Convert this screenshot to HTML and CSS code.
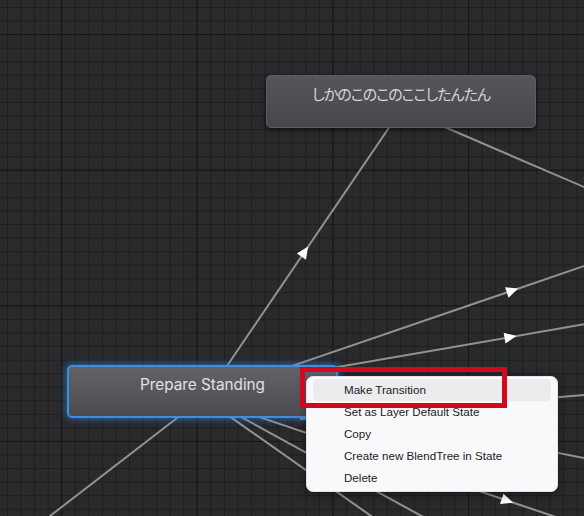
FILE: index.html
```html
<!DOCTYPE html>
<html lang="ja">
<head>
<meta charset="utf-8">
<title>Animator</title>
<link rel="stylesheet" href="styles.css">
</head>
<body>
<div class="canvas">
  <svg class="edges" width="584" height="516" viewBox="0 0 584 516" xmlns="http://www.w3.org/2000/svg">
    <g class="edge-lines">
      <line x1="210" y1="391" x2="401" y2="110"/>
      <line x1="405" y1="110" x2="590" y2="189.6"/>
      <line x1="250" y1="380.4" x2="590" y2="264"/>
      <line x1="300" y1="373.5" x2="590" y2="323.3"/>
      <line x1="220" y1="409.6" x2="391" y2="530"/>
      <line x1="230" y1="410.9" x2="447" y2="530"/>
      <line x1="240" y1="410.6" x2="590" y2="528.5"/>
      <line x1="300" y1="402.6" x2="590" y2="459.2"/>
      <line x1="300" y1="419" x2="590" y2="394.5"/>
      <line x1="190" y1="408" x2="35" y2="527.6"/>
    </g>
    <g class="edge-arrows">
      <polygon points="6.5,0 -5.5,-5.5 -5.5,5.5" transform="translate(304.5 252) rotate(-55.8)"/>
      <polygon points="6.5,0 -5.5,-5.5 -5.5,5.5" transform="translate(512 290.7) rotate(-18.9)"/>
      <polygon points="6.5,0 -5.5,-5.5 -5.5,5.5" transform="translate(510 337.2) rotate(-9.8)"/>
      <polygon points="6.5,0 -5.5,-5.5 -5.5,5.5" transform="translate(507 500.6) rotate(18.6)"/>
    </g>
  </svg>

  <div class="node node-top">
    <span class="node-label label-jp">しかのこのこのここしたんたん</span>
  </div>

  <div class="node node-selected">
    <span class="node-label">Prepare Standing</span>
  </div>

  <div class="menu">
    <div class="menu-item is-hover">Make Transition</div>
    <div class="menu-item">Set as Layer Default State</div>
    <div class="menu-item">Copy</div>
    <div class="menu-item">Create new BlendTree in State</div>
    <div class="menu-item">Delete</div>
  </div>

  <div class="callout"></div>
</div>
</body>
</html>
```

FILE: styles.css
```css
html, body {
  margin: 0;
  padding: 0;
  background: #28272a;
}

.canvas {
  position: relative;
  width: 584px;
  height: 516px;
  overflow: hidden;
  background-color: #2a292c;
  background-image:
    linear-gradient(to right, #151517 1px, transparent 1px),
    linear-gradient(to bottom, #151517 1px, transparent 1px),
    linear-gradient(to right, #1e1e20 1px, transparent 1px),
    linear-gradient(to bottom, #1e1e20 1px, transparent 1px);
  background-size: 135.7px 135.7px, 135.7px 135.7px, 13.57px 13.57px, 13.57px 13.57px;
  background-position: 61px 34px, 61px 34px, 7px 7px, 7px 7px;
}

.edges {
  position: absolute;
  left: 0;
  top: 0;
}

.edge-lines line {
  stroke: #929294;
  stroke-width: 2;
}

.edge-arrows polygon {
  fill: #ffffff;
}

.node {
  position: absolute;
  box-sizing: border-box;
  border-radius: 5px;
  font-family: Inter, "Noto Sans", "Noto Sans CJK JP", sans-serif;
  text-align: center;
}

.node-label {
  display: block;
  line-height: 20px;
}

.node-top {
  left: 266px;
  top: 75px;
  width: 270px;
  height: 53px;
  padding-top: 8px;
  background: linear-gradient(to bottom, #55555b, #46464b);
  border: 1px solid #5c5c62;
  box-shadow: 0 2px 5px rgba(0, 0, 0, 0.55);
  color: #d6d6d8;
}

.label-jp {
  font-family: "Noto Sans CJK JP", sans-serif;
  font-size: 15px;
  font-feature-settings: "palt";
  letter-spacing: -1px;
}

.node-selected {
  left: 67px;
  top: 365px;
  width: 271px;
  height: 53px;
  padding-top: 8px;
  background: linear-gradient(to bottom, #626268, #4b4b51);
  border: 2px solid #3d8ee0;
  box-shadow: 0 0 6px 2px rgba(55, 135, 225, 0.5);
  color: #e2e2e4;
  font-size: 15.3px;
}

.menu {
  position: absolute;
  left: 306px;
  top: 376px;
  width: 252px;
  height: 116px;
  box-sizing: border-box;
  padding: 2px 6px 2px;
  display: flex;
  flex-direction: column;
  background: #f9f9fb;
  border: 1px solid #e4e4e8;
  border-radius: 7px;
  box-shadow: 0 3px 10px rgba(0, 0, 0, 0.35);
  font-family: "Liberation Sans", Arial, sans-serif;
  font-size: 11.6px;
  color: #1b1b1b;
}

.menu-item {
  height: 22px;
  line-height: 22px;
  padding-left: 31px;
  border-radius: 4px;
  white-space: nowrap;
}

.menu-item.is-hover {
  background: #ececef;
}

.callout {
  position: absolute;
  left: 300px;
  top: 367px;
  width: 207px;
  height: 41px;
  box-sizing: border-box;
  border: 5px solid #d2081f;
}
```
